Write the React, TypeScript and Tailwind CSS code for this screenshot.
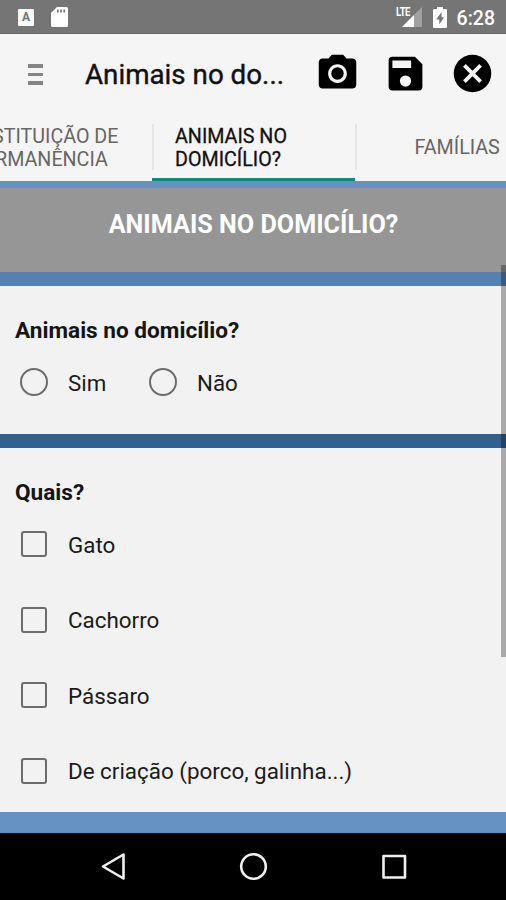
import React from "react";

const animals = ["Gato", "Cachorro", "Pássaro", "De criação (porco, galinha...)"];

function StatusBar() {
  return (
    <header className="flex h-[34px] items-center border-b border-[#6a6a6a] bg-[#757575]">
      <div className="ml-[18px] mt-px flex h-[17px] w-4 items-center justify-center rounded-[1px] bg-[#f8f8f8] text-[12px] font-bold leading-none text-[#757575]">A</div>
      <svg className="ml-[17px] mt-px h-[20px] w-[17px]" viewBox="0 0 17 20">
        <path d="M6 0H15.5Q17 0 17 1.5V18.5Q17 20 15.5 20H1.5Q0 20 0 18.5V6Z" fill="#fff" />
        <path d="M6.8 2.5V5.5M10 2.5V5.5M13.2 2.5V5.5" stroke="#757575" strokeWidth="1.7" />
      </svg>
      <div className="relative ml-auto mr-[11px] mt-px h-[20px] w-[26px]">
        <svg className="h-full w-full" viewBox="0 0 26 20">
          <path d="M26 0V20H6Z" fill="#a0a0a0" />
          <path d="M18 8V20H6Z" fill="#fff" />
          <path d="M0 0H14V9H0Z" fill="#757575" />
        </svg>
        <span className="absolute left-0 top-px origin-left scale-x-[0.8] text-[12px] font-bold leading-[9px] tracking-[-0.6px] text-white">LTE</span>
      </div>
      <svg className="mr-[10px] mt-px h-[21px] w-[14px]" viewBox="0 0 14 21">
        <path d="M4 0H10V2H12.7Q14 2 14 3.3V19.7Q14 21 12.7 21H1.3Q0 21 0 19.7V3.3Q0 2 1.3 2H4Z" fill="#fff" />
        <path d="M8.5 5L3.2 12.5H6.3V17.5L11 10.3H8.5Z" fill="#757575" />
      </svg>
      <span className="mr-[11px] mt-[4px] text-[19.5px] font-medium leading-6 text-white">6:28</span>
    </header>
  );
}

function Toolbar() {
  return (
    <div className="flex h-[80px] items-center pr-[11px]">
      <div className="ml-[28px] mt-px flex w-[15px] flex-col gap-[5px]">
        <i className="h-[3.5px] bg-[#858585]" />
        <i className="h-[3.5px] bg-[#858585]" />
        <i className="h-[3.5px] bg-[#858585]" />
      </div>
      <h1 className="ml-[42px] mt-[2px] whitespace-nowrap text-[27.75px] font-normal leading-8 text-[#111] [-webkit-text-stroke:0.4px_#111]">Animais no do...</h1>
      <div className="mb-px ml-auto flex gap-[22.5px]">
        <svg className="size-[45px]" viewBox="0 0 24 24">
          <circle cx="12" cy="12" r="3.3" />
          <path d="M9 2L7.17 4H4c-1.1 0-2 .9-2 2v12c0 1.1.9 2 2 2h16c1.1 0 2-.9 2-2V6c0-1.1-.9-2-2-2h-3.17L15 2H9zm3 15c-2.76 0-5-2.24-5-5s2.24-5 5-5 5 2.24 5 5-2.24 5-5 5z" />
        </svg>
        <svg className="size-[45px]" viewBox="0 0 24 24">
          <path d="M17 3H5a2 2 0 0 0-2 2v14a2 2 0 0 0 2 2h14a2 2 0 0 0 2-2V7l-4-4zM12 19a3 3 0 1 1 0-6 3 3 0 0 1 0 6zM15 9H5V5h10v4z" />
        </svg>
        <svg className="size-[45px]" viewBox="0 0 24 24">
          <circle cx="12" cy="12" r="10" />
          <path d="M7.7 7.7L16.3 16.3M16.3 7.7L7.7 16.3" stroke="#f5f5f5" strokeWidth="2" />
        </svg>
      </div>
    </div>
  );
}

function Tabs() {
  return (
    <nav className="flex h-[67px] overflow-hidden text-[19.7px] leading-[22.5px] text-[#666]">
      <div className="flex w-[152px] shrink-0 flex-col items-start pt-[12px]">
        <span className="-ml-[8px] whitespace-nowrap">STITUIÇÃO DE</span>
        <span className="-ml-[5px] whitespace-nowrap">RMANÊNCIA</span>
      </div>
      <div className="flex w-[203px] shrink-0 flex-col border-b-[3px] border-[#12897b] text-[#111]">
        <div className="mt-[10px] h-[46px] border-l-2 border-[#e5e5e5] pl-[21px] pt-[2px] [-webkit-text-stroke:0.3px_#111]">
          ANIMAIS NO<br />DOMICÍLIO?
        </div>
      </div>
      <div className="mt-[10px] flex h-[46px] flex-1 items-center border-l-2 border-[#e5e5e5] pl-[57.5px] pt-[2px]">FAMÍLIAS</div>
    </nav>
  );
}

export default function App() {
  return (
    <div className="relative flex h-[900px] w-[506px] flex-col overflow-hidden bg-[#f5f5f5] font-[Roboto,sans-serif]">
      <StatusBar />
      <Toolbar />
      <Tabs />
      <div className="h-[7px] shrink-0 bg-[#6791c5]" />
      <div className="h-[84px] shrink-0 bg-[#969696] pl-px pt-[21px] text-center text-[25.2px] font-bold leading-8 text-white">
        <span>ANIMAIS NO DOMICÍLIO?</span>
      </div>
      <div className="h-[14px] shrink-0 bg-[#5580af]" />
      <section className="h-[148px] shrink-0 bg-[#f2f2f2] pl-[15px] pt-[31px]">
        <h2 className="text-[22.6px] font-bold leading-7 text-[#151515]">Animais no domicílio?</h2>
        <div className="mt-[23px] flex h-[28px] items-center pl-[5px] text-[22.3px] leading-8 text-[#1b1b1b]">
          <i className="size-[28px] rounded-full border-2 border-[#6c6c6c]" />
          <span className="ml-[20px] mt-px w-[81px]">Sim</span>
          <i className="size-[28px] rounded-full border-2 border-[#6c6c6c]" />
          <span className="ml-[20px] mt-px">Não</span>
        </div>
      </section>
      <div className="h-[14px] shrink-0 bg-[#33618f]" />
      <section className="h-[364px] shrink-0 bg-[#f2f2f2] pl-[15px] pt-[31px]">
        <h2 className="text-[22.6px] font-bold leading-7 text-[#151515]">Quais?</h2>
        <div className="mt-[24px] flex flex-col gap-[49.5px] pl-[6px] text-[22.4px] leading-8 text-[#1b1b1b]">
          {animals.map((name) => (
            <label key={name} className="flex h-[26px] items-center">
              <i className="size-[26px] rounded-[3px] border-2 border-[#6c6c6c]" />
              <span className="ml-[21px] mt-px">{name}</span>
            </label>
          ))}
        </div>
      </section>
      <div className="h-[21px] shrink-0 bg-[#6592c1]" />
      <footer className="flex flex-1 items-center bg-black">
        <svg className="h-[67px] w-[506px]" viewBox="0 0 506 67" fill="none" stroke="#f0f0f0" strokeWidth="2.6" strokeLinejoin="round">
          <path d="M123.5 21.5V45.5L103 33.5Z" />
          <circle cx="253.5" cy="33.5" r="12.3" />
          <rect x="383.5" y="23" width="21.5" height="21.5" />
        </svg>
      </footer>
      <div className="absolute right-0 top-[265px] h-[392px] w-[5px] bg-black/30" />
    </div>
  );
}
